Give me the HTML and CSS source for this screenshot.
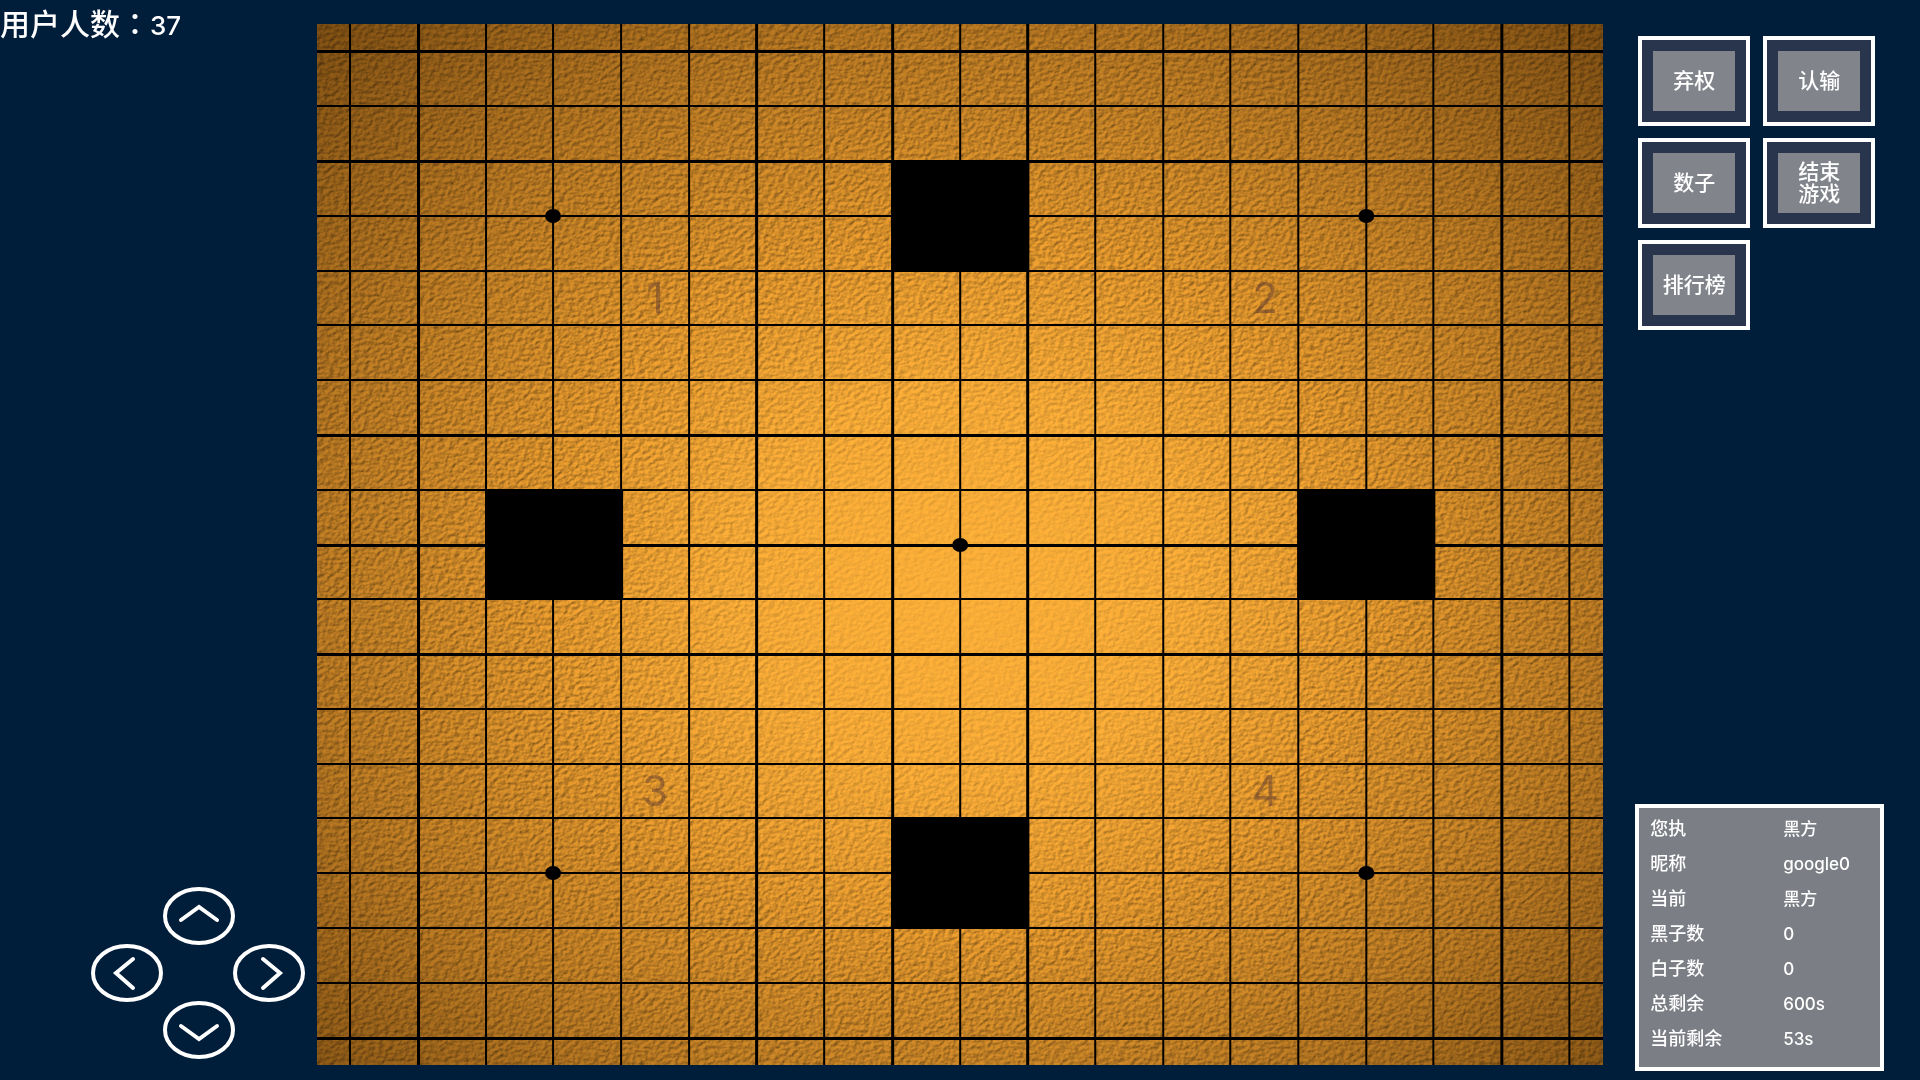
FILE: index.html
```html
<!DOCTYPE html>
<html lang="zh-CN">
<head>
  <meta charset="UTF-8" />
  <meta name="viewport" content="width=device-width, initial-scale=1.0"/>
  <title>围棋</title>
  <link rel="stylesheet" href="styles.css">
</head>
<body>
  <aside class="left">
    <p class="online"><span lang="zh-TW">用户人数：</span><span class="count">37</span></p>

    <div class="pad">
      <button class="arrow up" aria-label="上">
        <svg viewBox="0 0 72 58"><ellipse cx="36" cy="29" rx="34" ry="27"/><path d="M18 33 L36 20 L54 33"/></svg>
      </button>
      <button class="arrow prev" aria-label="左">
        <svg viewBox="0 0 72 58"><ellipse cx="36" cy="29" rx="34" ry="27"/><path d="M42 15 L25 29 L42 44"/></svg>
      </button>
      <button class="arrow next" aria-label="右">
        <svg viewBox="0 0 72 58"><ellipse cx="36" cy="29" rx="34" ry="27"/><path d="M30 15 L47 29 L30 44"/></svg>
      </button>
      <button class="arrow down" aria-label="下">
        <svg viewBox="0 0 72 58"><ellipse cx="36" cy="29" rx="34" ry="27"/><path d="M18 25 L36 38 L54 25"/></svg>
      </button>
    </div>
  </aside>

  <main class="board">
    <svg id="goban" viewBox="0 0 1286 1041" preserveAspectRatio="none">
      <defs>
        <filter id="leather" x="0" y="0" width="100%" height="100%" color-interpolation-filters="sRGB">
          <feTurbulence type="fractalNoise" baseFrequency="0.2 0.25" numOctaves="3" seed="8" result="noise"/>
          <feDiffuseLighting in="noise" surfaceScale="0.8" diffuseConstant="1.26" lighting-color="#ffffff">
            <feDistantLight azimuth="225" elevation="45"/>
          </feDiffuseLighting>
        </filter>
        <radialGradient id="light" gradientUnits="userSpaceOnUse" cx="0" cy="0" r="1" gradientTransform="translate(643 560) scale(920 770)">
          <stop offset="0" stop-color="#ffb239"/>
          <stop offset="0.25" stop-color="#ffb038"/>
          <stop offset="0.45" stop-color="#f0a02f"/>
          <stop offset="0.7" stop-color="#c48024"/>
          <stop offset="1" stop-color="#845213"/>
        </radialGradient>
        <radialGradient id="fade" gradientUnits="userSpaceOnUse" cx="0" cy="0" r="1" gradientTransform="translate(643 570) scale(600 520)">
          <stop offset="0" stop-color="#333"/>
          <stop offset="0.2" stop-color="#555"/>
          <stop offset="0.7" stop-color="#fff"/>
        </radialGradient>
        <mask id="edges" maskUnits="userSpaceOnUse" x="0" y="0" width="1286" height="1041">
          <rect width="1286" height="1041" fill="url(#fade)"/>
        </mask>
      </defs>
      <rect width="1286" height="1041" fill="url(#light)"/>
      <g class="texture" mask="url(#edges)">
        <rect width="1286" height="1041" filter="url(#leather)"/>
      </g>
      <g class="zone">
        <text x="338" y="289">1</text>
        <text x="948" y="289">2</text>
        <text x="338" y="782">3</text>
        <text x="948" y="782">4</text>
      </g>
      <g id="lines"></g>
      <g id="blocks"></g>
      <g id="stars"></g>
    </svg>
  </main>

  <aside class="right">
    <div class="actions">
      <button class="action">弃权</button>
      <button class="action">认输</button>
      <button class="action">数子</button>
      <button class="action">结束<br>游戏</button>
      <button class="action">排行榜</button>
    </div>

    <table class="info">
      <tr><th scope="row">您执</th><td>黑方</td></tr>
      <tr><th scope="row">昵称</th><td>google0</td></tr>
      <tr><th scope="row">当前</th><td>黑方</td></tr>
      <tr><th scope="row">黑子数</th><td>0</td></tr>
      <tr><th scope="row">白子数</th><td>0</td></tr>
      <tr><th scope="row">总剩余</th><td>600s</td></tr>
      <tr><th scope="row">当前剩余</th><td>53s</td></tr>
    </table>
  </aside>

  <script src="board.js"></script>
</body>
</html>
```
FILE: styles.css
```css
body {
  margin: 0;
  min-height: 100vh;
  display: flex;
  background: #001d3a;
  color: #fff;
  font-family: Inter, "Noto Sans CJK SC", sans-serif;
  font-weight: 500;
}

button {
  padding: 0;
  border: none;
  background: none;
  color: inherit;
  font-family: inherit;
  font-weight: inherit;
  cursor: pointer;
}

.left,
.right {
  box-sizing: border-box;
  width: 16.5%;
  display: flex;
  flex-direction: column;
  justify-content: space-between;
}

/* online counter */
.online {
  margin: 0;
  padding-top: 2px;
  font-size: 30px;
  line-height: 40px;
  white-space: nowrap;
}

.online span:first-child {
  font-family: "Noto Sans CJK TC", sans-serif;
}

.online .count {
  font-size: 26px;
}

/* direction pad */
.pad {
  display: grid;
  grid-template-columns: 72px 70px 72px;
  justify-content: end;
  margin: 0 12px 22px 0;
}

.arrow {
  width: 72px;
  height: 57px;
}

.arrow svg {
  display: block;
  fill: none;
  stroke: #fff;
  stroke-width: 4;
  stroke-linecap: round;
}

.up { grid-area: 1 / 2; }
.prev { grid-area: 2 / 1; }
.next { grid-area: 2 / 3; }
.down { grid-area: 3 / 2; }

/* board */
.board {
  width: 67%;
  height: calc(100vh - 39px);
  padding: 24px 0 15px;
}

.board svg {
  display: block;
  width: 100%;
  height: 100%;
}

.texture {
  mix-blend-mode: multiply;
}

.zone text {
  font-size: 42px;
  font-weight: 400;
  text-anchor: middle;
  fill: #5c3830;
  fill-opacity: 0.5;
}

/* right column */
.right {
  padding: 36px 36px 9px 32px;
}

.actions {
  display: grid;
  grid-template-columns: 112px 112px;
  gap: 12px 13px;
  padding-left: 3px;
}

.action {
  box-sizing: border-box;
  height: 90px;
  border: 4px solid #fff;
  background: #82848c;
  box-shadow: inset 0 0 0 11px #29354c;
  font-size: 21px;
  line-height: 22px;
}

.info {
  box-sizing: border-box;
  width: 100%;
  border: 4px solid #fff;
  border-spacing: 0;
  background: #7c7e86;
  padding: 3px 11px 11px;
  table-layout: fixed;
}

.info th,
.info td {
  height: 35px;
  padding: 0;
  font-size: 18px;
  line-height: 20px;
  font-weight: 500;
  text-align: left;
}

.info td {
  font-size: 17px;
}

.info th {
  width: 133px;
}
```
FILE: board.js
```javascript
const NS = "http://www.w3.org/2000/svg";
const W = 1286, H = 1041, SIZE = 19;
const cw = W / SIZE, ch = H / SIZE;

const px = (i) => Math.floor((i + 0.5) * cw);
const py = (i) => Math.round((i + 0.5) * ch);

function add(parent, tag, attrs) {
  const el = document.createElementNS(NS, tag);
  for (const key in attrs) el.setAttribute(key, attrs[key]);
  document.getElementById(parent).appendChild(el);
}

// some lines are heavier than the others
const heavyCols = [1, 6, 8, 10, 17];
const heavyRows = [0, 2, 7, 9, 11, 18];

for (let i = 0; i < SIZE; i++) {
  add("lines", "rect", { x: px(i) - 1, y: 0, width: heavyCols.includes(i) ? 3 : 2, height: H });
  add("lines", "rect", { x: 0, y: py(i) - 1, width: W, height: heavyRows.includes(i) ? 3 : 2 });
}

// blocked areas, two cells wide
[[8, 2], [2, 8], [14, 8], [8, 14]].forEach(([c, r]) => {
  add("blocks", "rect", { x: px(c) - 1, y: py(r) - 1, width: px(c + 2) - px(c) + 3, height: py(r + 2) - py(r) + 2 });
});

// star points
[[3, 3], [15, 3], [9, 9], [3, 15], [15, 15]].forEach(([c, r]) => {
  add("stars", "ellipse", { cx: px(c), cy: py(r), rx: 8, ry: 7 });
});
```
